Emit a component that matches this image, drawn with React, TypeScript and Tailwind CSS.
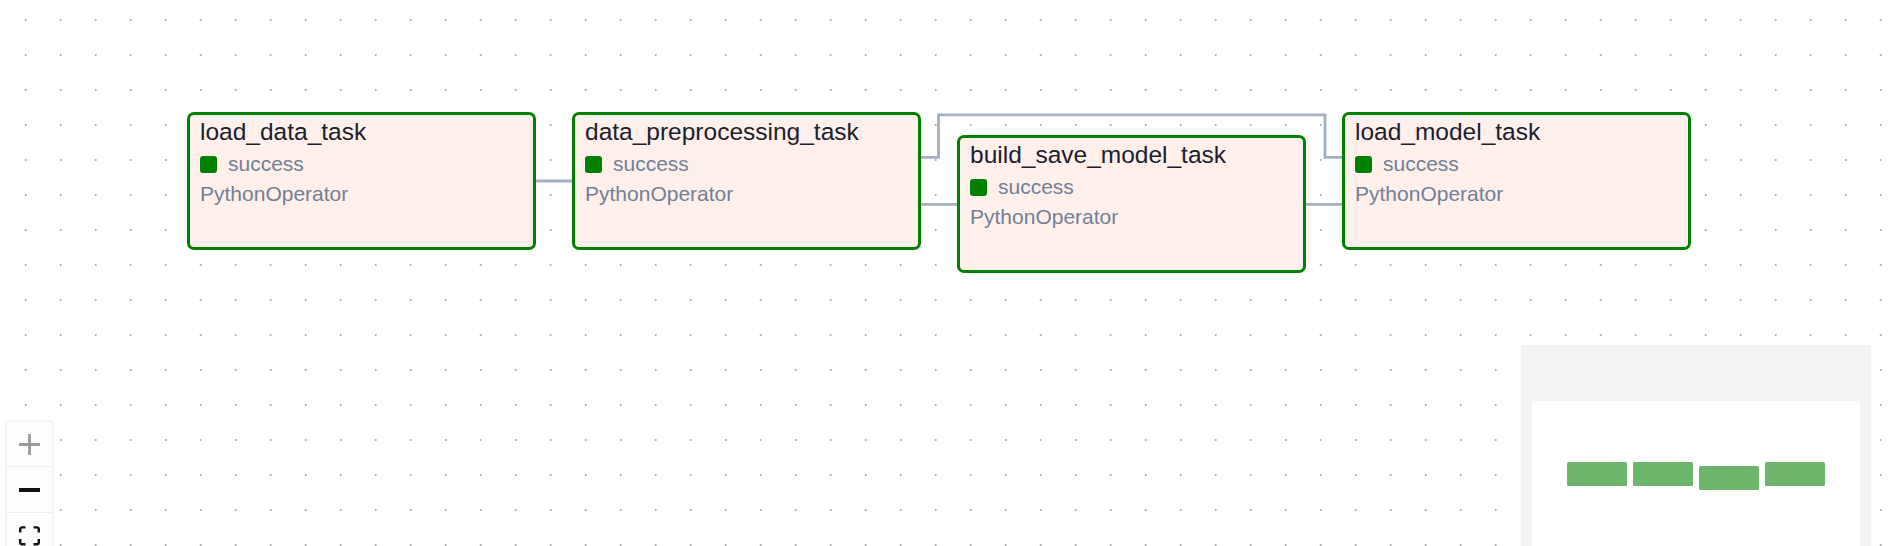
import React from "react";

type Task = { id: string; x: number; y: number };

const tasks: Task[] = [
  { id: "load_data_task", x: 187, y: 112 },
  { id: "data_preprocessing_task", x: 572, y: 112 },
  { id: "build_save_model_task", x: 957, y: 135 },
  { id: "load_model_task", x: 1342, y: 112 },
];

const edges = [
  "M535 181 L572 181",
  "M921 204.3 L957 204.3",
  "M921 157.3 L938.5 157.3 L938.5 114.8 L1325 114.8 L1325 157.3 L1342 157.3",
  "M1306 204.3 L1342 204.3",
];

function TaskNode({ task }: { task: Task }) {
  return (
    <div
      className="absolute w-[349px] h-[138px] rounded-[7px] border-[3px] border-[#008000] bg-[#fff0ec] pl-[10px]"
      style={{ left: task.x, top: task.y }}
    >
      <div className="text-[24.5px] leading-[34px] text-[#1a202c]">{task.id}</div>
      <div className="flex items-center text-[21px] leading-[30px] text-[#718096]">
        <span className="w-[17px] h-[17px] rounded-[3px] bg-[#008000] mr-[11px]" />
        success
      </div>
      <div className="text-[21px] leading-[30px] text-[#718096]">PythonOperator</div>
    </div>
  );
}

export default function App() {
  return (
    <div className="relative w-[1891px] h-[546px] overflow-hidden bg-white font-['Liberation_Sans',Arial,sans-serif]">
      {/* dotted background */}
      <svg className="absolute inset-0" width="1891" height="546">
        <defs>
          <pattern id="dots" x="0" y="0" width="35" height="35" patternUnits="userSpaceOnUse">
            <circle cx="25.7" cy="20" r="1.1" fill="#a8a8b0" />
          </pattern>
        </defs>
        <rect width="1891" height="546" fill="url(#dots)" />
      </svg>

      {/* edges */}
      <svg className="absolute inset-0" width="1891" height="546">
        {edges.map((d, i) => (
          <path key={i} d={d} fill="none" stroke="#a3b0c2" strokeWidth="2.8" />
        ))}
      </svg>

      {tasks.map((t) => (
        <TaskNode key={t.id} task={t} />
      ))}

      {/* controls */}
      <div className="absolute left-[7px] top-[422px] w-[45px] flex flex-col shadow-[0_0_2px_1px_rgba(0,0,0,0.08)]">
        <button className="h-[45px] flex items-center justify-center bg-[#fefefe] border-b border-[#eee]">
          <svg width="21" height="21" viewBox="0 0 32 32" fill="#9a9a9a">
            <path d="M32 18.133H18.133V32h-4.266V18.133H0v-4.266h13.867V0h4.266v13.867H32z" />
          </svg>
        </button>
        <button className="h-[46px] flex items-center justify-center bg-[#fefefe] border-b border-[#eee]">
          <svg width="21" height="4" viewBox="0 0 32 5" preserveAspectRatio="none" fill="#111">
            <path d="M0 0h32v5H0z" />
          </svg>
        </button>
        <button className="h-[46px] flex items-center justify-center bg-[#fefefe]">
          <svg width="21" height="20" viewBox="0 0 32 30" fill="#111">
            <path d="M3.692 4.63c0-.53.4-.938.939-.938h5.215V0H4.708C2.13 0 0 2.054 0 4.63v5.216h3.692V4.631zM27.354 0h-5.2v3.692h5.17c.53 0 .984.4.984.939v5.215H32V4.631A4.624 4.624 0 0027.354 0zm.954 24.83c0 .532-.4.94-.939.94h-5.215v3.768h5.215c2.577 0 4.631-2.13 4.631-4.707v-5.139h-3.692v5.139zm-23.677.94c-.531 0-.939-.4-.939-.94v-5.138H0v5.139c0 2.577 2.13 4.707 4.708 4.707h5.138V25.77H4.631z" />
          </svg>
        </button>
      </div>

      {/* minimap */}
      <div className="absolute left-[1521px] top-[345px] w-[350px] h-[220px] bg-[#f4f4f4] pl-[11px] pt-[56px]">
        <div className="w-[328px] h-[200px] bg-white">
          <svg width="328" height="200">
            <rect x="35" y="61" width="60" height="24" rx="1.5" fill="#6fb66d" />
            <rect x="101" y="61" width="60" height="24" rx="1.5" fill="#6fb66d" />
            <rect x="167" y="65" width="60" height="24" rx="1.5" fill="#6fb66d" />
            <rect x="233" y="61" width="60" height="24" rx="1.5" fill="#6fb66d" />
          </svg>
        </div>
      </div>
    </div>
  );
}
